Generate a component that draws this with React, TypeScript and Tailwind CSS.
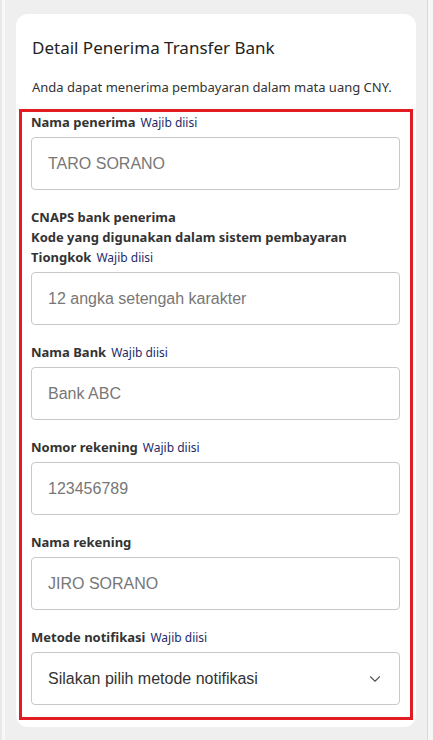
import { ChevronDown } from "lucide-react";

type Field = {
  label: string[];
  required: boolean;
  placeholder: string;
  select?: boolean;
};

const fields: Field[] = [
  { label: ["Nama penerima"], required: true, placeholder: "TARO SORANO" },
  {
    label: [
      "CNAPS bank penerima",
      "Kode yang digunakan dalam sistem pembayaran",
      "Tiongkok",
    ],
    required: true,
    placeholder: "12 angka setengah karakter",
  },
  { label: ["Nama Bank"], required: true, placeholder: "Bank ABC" },
  { label: ["Nomor rekening"], required: true, placeholder: "123456789" },
  { label: ["Nama rekening"], required: false, placeholder: "JIRO SORANO" },
  {
    label: ["Metode notifikasi"],
    required: true,
    placeholder: "Silakan pilih metode notifikasi",
    select: true,
  },
];

function FormField({ field, first }: { field: Field; first: boolean }) {
  return (
    <div className={first ? "" : "mt-[17px]"}>
      <div className="text-[13px] font-bold text-[#333] mb-[5px]">
        {field.label.map((line, i) => (
          <div key={i} className="flex items-baseline h-[20px] leading-[20px]">
            <span>{line}</span>
            {i === field.label.length - 1 && field.required && (
              <span className="font-normal text-[12px] leading-[20px] text-[#1c2a6b] ml-[5px]">
                Wajib diisi
              </span>
            )}
          </div>
        ))}
      </div>
      {field.select ? (
        <div className="h-[53px] border border-[#c8c8c8] rounded-[4px] flex items-center justify-between pl-[16px] pr-[15px] bg-white">
          <span className="text-[16px] text-[#333] font-['Liberation_Sans',Arial,sans-serif]">
            {field.placeholder}
          </span>
          <ChevronDown size={18} strokeWidth={1.5} className="text-[#555]" />
        </div>
      ) : (
        <input
          className="block w-full h-[53px] border border-[#c8c8c8] rounded-[4px] px-[16px] text-[16px] text-[#333] placeholder:text-[#777] font-['Liberation_Sans',Arial,sans-serif] outline-none bg-white"
          placeholder={field.placeholder}
        />
      )}
    </div>
  );
}

export default function App() {
  return (
    <div className="h-[740px] w-[433px] bg-[#efefef] flex font-['Noto_Sans',sans-serif] overflow-hidden">
      <div className="w-[2px] bg-[#e8e8e8]" />
      <div className="w-[3px] bg-[#f8f8f8]" />
      <div className="flex-1 px-[11px] pt-[14px]">
        <div className="bg-white rounded-[12px] h-[713px] pt-[22px]">
          <h2 className="px-[16px] text-[17px] leading-[24px] text-[#222]">
            Detail Penerima Transfer Bank
          </h2>
          <p className="px-[16px] mt-[17px] text-[13px] leading-[20px] text-[#333]">
            Anda dapat menerima pembayaran dalam mata uang CNY.
          </p>
          <div className="mt-[12px] mx-[3px] border-[3px] border-[#e31b23] pl-[9px] pr-[10px] pt-0 pb-[12px]">
            {fields.map((f, i) => (
              <FormField key={i} field={f} first={i === 0} />
            ))}
          </div>
        </div>
      </div>
      <div className="w-px bg-[#d9d9d9]" />
      <div className="w-[5px] bg-[#f6f6f6]" />
    </div>
  );
}
